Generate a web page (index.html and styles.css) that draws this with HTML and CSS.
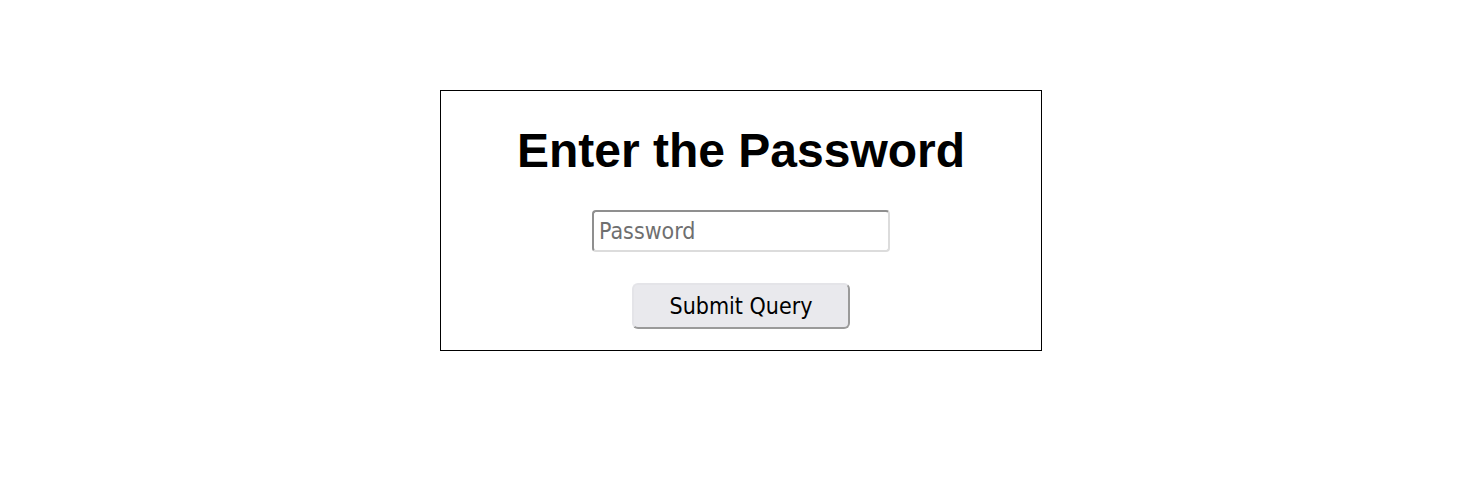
FILE: index.html
```html
<!DOCTYPE html>
<html>
<head>
<meta charset="utf-8">
<link rel="stylesheet" href="styles.css">
</head>
<body>
<div class="page">
  <form class="card">
    <h1 class="title">Enter the Password</h1>
    <input class="pw" type="password" placeholder="Password">
    <button class="submit" type="button">Submit Query</button>
  </form>
</div>
</body>
</html>
```
FILE: styles.css
```css
html, body {
  margin: 0;
  padding: 0;
  background: #fff;
}
.page {
  padding-top: 90px;
  padding-left: 440px;
}
.card {
  box-sizing: border-box;
  width: 602px;
  height: 261px;
  border: 1px solid #000;
  display: flex;
  flex-direction: column;
  align-items: center;
  margin: 0;
}
.title {
  font-family: "Liberation Sans", Arial, sans-serif;
  font-weight: bold;
  font-size: 48px;
  line-height: 55px;
  margin: 32px 0 32px 0;
  color: #000;
}
.pw {
  box-sizing: border-box;
  width: 298px;
  height: 42px;
  margin: 0;
  padding: 0 5px;
  border: 2px solid;
  border-color: #8f8f8f #dcdcdc #dcdcdc #8f8f8f;
  border-radius: 4px;
  font-family: "DejaVu Sans Condensed", "DejaVu Sans", sans-serif;
  font-size: 23px;
  color: #000;
  background: #fff;
  outline: none;
}
.pw::placeholder {
  color: #6f6f6f;
}
.submit {
  box-sizing: border-box;
  width: 218px;
  height: 46px;
  margin-top: 31px;
  padding: 0;
  border: 2px solid;
  border-color: #e4e4e8 #9a9a9a #9a9a9a #e4e4e8;
  border-radius: 6px;
  background: #e9e9ed;
  font-family: "DejaVu Sans Condensed", "DejaVu Sans", sans-serif;
  font-size: 23px;
  color: #000;
}
```
